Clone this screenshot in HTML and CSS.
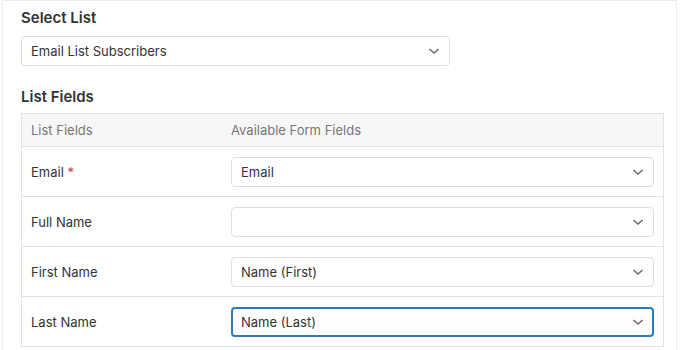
FILE: index.html
```html
<!DOCTYPE html>
<html>
<head>
<meta charset="utf-8">
<link rel="stylesheet" href="styles.css">
</head>
<body>
<div class="panel">
  <h3 class="heading">Select List</h3>
  <div class="select list-select">
    <span>Email List Subscribers</span>
    <svg class="chev" width="12" height="8" viewBox="0 0 12 8"><path d="M1.5 2 L6 6 L10.5 2" fill="none" stroke="#6b6b6b" stroke-width="1.6"/></svg>
  </div>
  <h3 class="heading fields-heading">List Fields</h3>
  <div class="table">
    <div class="row head">
      <div class="c1">List Fields</div>
      <div class="c2">Available Form Fields</div>
    </div>
    <div class="row">
      <div class="c1">Email <span class="req">*</span></div>
      <div class="c2"><div class="select"><span>Email</span><svg class="chev" width="12" height="8" viewBox="0 0 12 8"><path d="M1.5 2 L6 6 L10.5 2" fill="none" stroke="#6b6b6b" stroke-width="1.6"/></svg></div></div>
    </div>
    <div class="row">
      <div class="c1">Full Name</div>
      <div class="c2"><div class="select"><span></span><svg class="chev" width="12" height="8" viewBox="0 0 12 8"><path d="M1.5 2 L6 6 L10.5 2" fill="none" stroke="#6b6b6b" stroke-width="1.6"/></svg></div></div>
    </div>
    <div class="row">
      <div class="c1">First Name</div>
      <div class="c2"><div class="select"><span>Name (First)</span><svg class="chev" width="12" height="8" viewBox="0 0 12 8"><path d="M1.5 2 L6 6 L10.5 2" fill="none" stroke="#6b6b6b" stroke-width="1.6"/></svg></div></div>
    </div>
    <div class="row">
      <div class="c1">Last Name</div>
      <div class="c2"><div class="select focus"><span>Name (Last)</span><svg class="chev" width="12" height="8" viewBox="0 0 12 8"><path d="M1.5 2 L6 6 L10.5 2" fill="none" stroke="#6b6b6b" stroke-width="1.6"/></svg></div></div>
    </div>
  </div>
</div>
</body>
</html>
```
FILE: styles.css
```css
html, body {
  margin: 0;
  padding: 0;
  background: #fff;
  height: 350px;
  overflow: hidden;
}
body {
  font-family: Inter, "Liberation Sans", sans-serif;
  color: #333;
  font-size: 13px;
}
.panel {
  margin-left: 2px;
  width: 675px;
  height: 350px;
  border: 1px solid #ececec;
  border-bottom: none;
  padding: 0 0 0 18px;
  box-sizing: border-box;
  overflow: hidden;
}
.heading {
  margin: 0;
  padding-top: 8px;
  font-size: 15px;
  font-weight: 600;
  color: #333;
  line-height: 18px;
  height: 27px;
}
.fields-heading {
  padding-top: 0;
  height: 25px;
}
.select {
  height: 30px;
  box-sizing: border-box;
  border: 1px solid #dedede;
  border-radius: 4px;
  background: #fff;
  display: flex;
  align-items: center;
  justify-content: space-between;
  padding: 0 9px 0 9px;
  color: #333;
}
.list-select {
  width: 429px;
  margin-bottom: 22px;
}
.chev {
  display: block;
}
.table {
  width: 643px;
  border: 1px solid #e2e2e2;
  box-sizing: border-box;
}
.row {
  display: flex;
  align-items: center;
  height: 50px;
  border-top: 1px solid #e2e2e2;
  box-sizing: border-box;
}
.row.head {
  border-top: none;
  height: 32px;
  background: #f7f7f7;
  color: #777;
}
.c1 {
  width: 209px;
  padding-left: 9px;
  box-sizing: border-box;
}
.c2 {
  flex: 1;
  padding-right: 9px;
}
.req {
  color: #d63638;
}
.select.focus {
  border: 2px solid #2f7bbf;
  padding-left: 8px;
  padding-right: 8px;
}
```
